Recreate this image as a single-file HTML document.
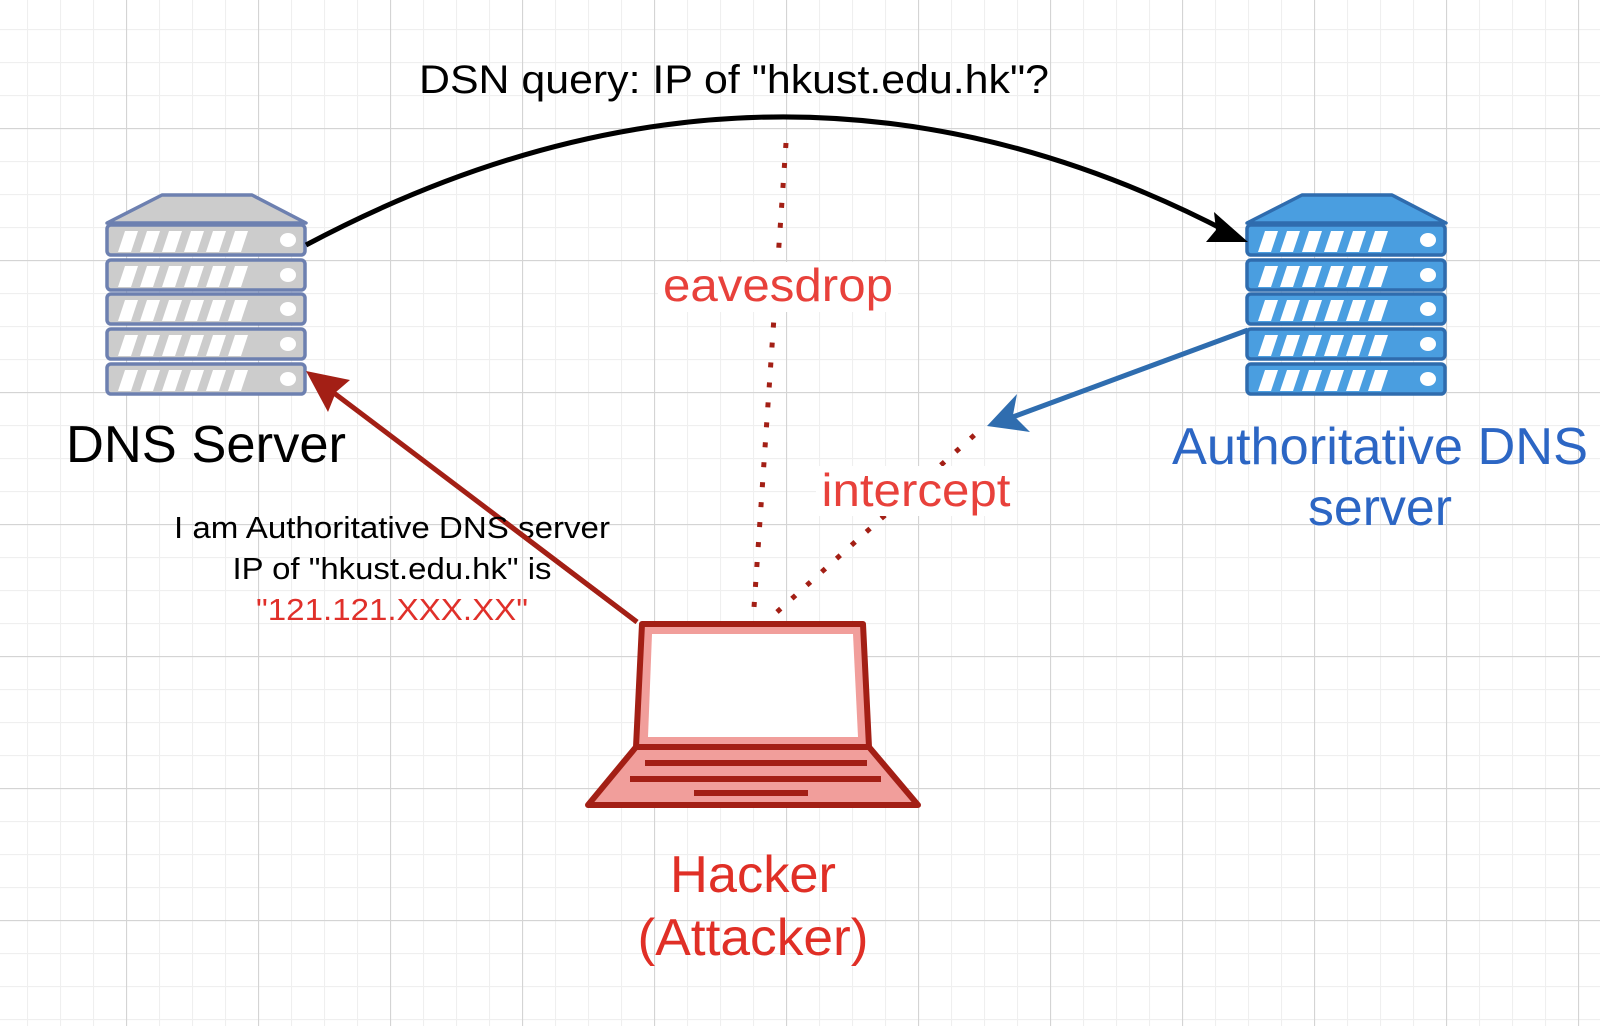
<!DOCTYPE html>
<html><head><meta charset="utf-8"><style>
html,body{margin:0;padding:0;background:#fff;width:1600px;height:1026px;overflow:hidden}
svg{display:block}
text{font-family:"Liberation Sans",Arial,sans-serif}
</style></head><body>
<svg width="1600" height="1026" viewBox="0 0 1600 1026" xmlns="http://www.w3.org/2000/svg">
<defs>
<pattern id="minor" width="33" height="33" patternUnits="userSpaceOnUse" x="-6" y="-4">
<path d="M0 0.5H33M0.5 0V33" stroke="#efefef" stroke-width="1.2" fill="none"/>
</pattern>
<pattern id="major" width="132" height="132" patternUnits="userSpaceOnUse" x="-6" y="-4">
<path d="M0 0.5H132M0.5 0V132" stroke="#d4d4d4" stroke-width="1.2" fill="none"/>
</pattern>
<g id="stripes">
<path d="M125 4h13l-7 21h-13z M147 4h13l-7 21h-13z M169 4h13l-7 21h-13z M191 4h13l-7 21h-13z M213 4h13l-7 21h-13z M235 4h13l-7 21h-13z" fill="#fff"/>
</g>
</defs>
<rect width="1600" height="1026" fill="url(#minor)"/>
<rect width="1600" height="1026" fill="url(#major)"/>

<g stroke="#6d80b0" stroke-width="3.5" stroke-linejoin="round">
<path d="M162 195H252L306 223H107Z" fill="#cccccc"/>
<rect x="107" y="225" width="198" height="30" rx="4" fill="#cccccc"/>
<rect x="107" y="260" width="198" height="30" rx="4" fill="#cccccc"/>
<rect x="107" y="294" width="198" height="30" rx="4" fill="#cccccc"/>
<rect x="107" y="329" width="198" height="30" rx="4" fill="#cccccc"/>
<rect x="107" y="364" width="198" height="30" rx="4" fill="#cccccc"/>
</g>
<g>
<use href="#stripes" transform="translate(0,227)"/>
<use href="#stripes" transform="translate(0,262)"/>
<use href="#stripes" transform="translate(0,296)"/>
<use href="#stripes" transform="translate(0,331)"/>
<use href="#stripes" transform="translate(0,366)"/>
<g fill="#fff"><ellipse cx="288" cy="240" rx="8" ry="7"/><ellipse cx="288" cy="275" rx="8" ry="7"/><ellipse cx="288" cy="309" rx="8" ry="7"/><ellipse cx="288" cy="344" rx="8" ry="7"/><ellipse cx="288" cy="379" rx="8" ry="7"/></g>
</g>

<g transform="translate(1140,0)">
<g stroke="#2f6cae" stroke-width="3.5" stroke-linejoin="round">
<path d="M162 195H252L306 223H107Z" fill="#4a9ee0"/>
<rect x="107" y="225" width="198" height="30" rx="4" fill="#4a9ee0"/>
<rect x="107" y="260" width="198" height="30" rx="4" fill="#4a9ee0"/>
<rect x="107" y="294" width="198" height="30" rx="4" fill="#4a9ee0"/>
<rect x="107" y="329" width="198" height="30" rx="4" fill="#4a9ee0"/>
<rect x="107" y="364" width="198" height="30" rx="4" fill="#4a9ee0"/>
</g>
<use href="#stripes" transform="translate(0,227)"/>
<use href="#stripes" transform="translate(0,262)"/>
<use href="#stripes" transform="translate(0,296)"/>
<use href="#stripes" transform="translate(0,331)"/>
<use href="#stripes" transform="translate(0,366)"/>
<g fill="#fff"><ellipse cx="288" cy="240" rx="8" ry="7"/><ellipse cx="288" cy="275" rx="8" ry="7"/><ellipse cx="288" cy="309" rx="8" ry="7"/><ellipse cx="288" cy="344" rx="8" ry="7"/><ellipse cx="288" cy="379" rx="8" ry="7"/></g>
</g>

<path d="M306 245Q776 -5 1230 233" stroke="#000" stroke-width="5" fill="none"/>
<path d="M1248 242L1206 242L1216 230L1214 212Z" fill="#000"/>

<path d="M637 622L330 390" stroke="#a31f15" stroke-width="5" fill="none"/>
<path d="M306 371L350 380L336 392L328 412Z" fill="#a31f15"/>

<path d="M1248 330L1010 418" stroke="#2f6daf" stroke-width="5" fill="none"/>
<path d="M987 426L1017 394L1013 415L1030 432Z" fill="#2f6daf"/>

<path d="M786 143L753 622" stroke="#a31f15" stroke-width="5" fill="none" stroke-dasharray="5 15"/>
<path d="M777 612L980 430" stroke="#a31f15" stroke-width="5" fill="none" stroke-dasharray="5 15"/>

<g stroke="#a31f15" stroke-width="6" stroke-linejoin="round">
<path d="M642 624H863L869 747H636Z" fill="#f19e9b"/>
<path d="M652 634H853L858 737H648Z" fill="#fff" stroke="none"/>
<path d="M636 747H869L918 805H588Z" fill="#f19e9b"/>
</g>
<g fill="#a31f15">
<rect x="645" y="760" width="222" height="6"/>
<rect x="630" y="776" width="251" height="6"/>
<rect x="694" y="790" width="114" height="6"/>
</g>

<rect x="658" y="262" width="240" height="50" fill="#fff"/>
<rect x="816" y="466" width="200" height="50" fill="#fff"/>

<g lengthAdjust="spacingAndGlyphs">
<text x="734" y="93" font-size="40" text-anchor="middle" fill="#000" textLength="630" lengthAdjust="spacingAndGlyphs">DSN query: IP of "hkust.edu.hk"?</text>
<text x="778" y="301" font-size="46" text-anchor="middle" fill="#e8413b" textLength="230" lengthAdjust="spacingAndGlyphs">eavesdrop</text>
<text x="916" y="506" font-size="46" text-anchor="middle" fill="#e8413b" textLength="189" lengthAdjust="spacingAndGlyphs">intercept</text>
<text x="206" y="462" font-size="52" text-anchor="middle" fill="#000" textLength="280" lengthAdjust="spacingAndGlyphs">DNS Server</text>
<text x="1380" y="464" font-size="52" text-anchor="middle" fill="#2c66c4" textLength="416" lengthAdjust="spacingAndGlyphs">Authoritative DNS</text>
<text x="1380" y="525" font-size="52" text-anchor="middle" fill="#2c66c4" textLength="144" lengthAdjust="spacingAndGlyphs">server</text>
<text x="753" y="892" font-size="52" text-anchor="middle" fill="#e02f26" textLength="166" lengthAdjust="spacingAndGlyphs">Hacker</text>
<text x="753" y="955" font-size="52" text-anchor="middle" fill="#e02f26" textLength="231" lengthAdjust="spacingAndGlyphs">(Attacker)</text>
<text x="392" y="538" font-size="31" text-anchor="middle" fill="#000" textLength="436" lengthAdjust="spacingAndGlyphs">I am Authoritative DNS server</text>
<text x="392" y="579" font-size="31" text-anchor="middle" fill="#000" textLength="319" lengthAdjust="spacingAndGlyphs">IP of "hkust.edu.hk" is</text>
<text x="392" y="620" font-size="31" text-anchor="middle" fill="#e0302a" textLength="272" lengthAdjust="spacingAndGlyphs">"121.121.XXX.XX"</text>
</g>
<path d="M637 622L505 522" stroke="#a31f15" stroke-width="5" fill="none"/>
</svg>
</body></html>
